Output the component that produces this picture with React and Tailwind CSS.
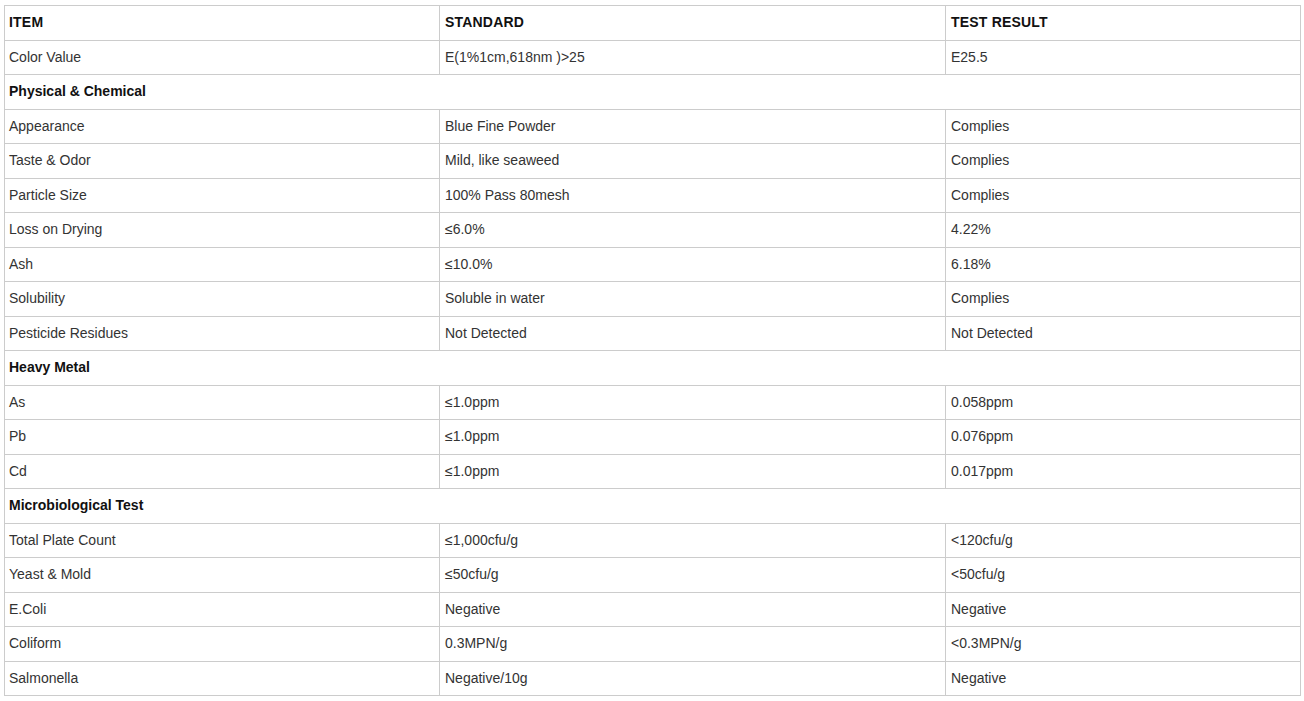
import React from "react";

const rows = [
  ["head", "ITEM", "STANDARD", "TEST RESULT"],
  ["row", "Color Value", "E(1%1cm,618nm )>25", "E25.5"],
  ["group", "Physical & Chemical"],
  ["row", "Appearance", "Blue Fine Powder", "Complies"],
  ["row", "Taste & Odor", "Mild, like seaweed", "Complies"],
  ["row", "Particle Size", "100% Pass 80mesh", "Complies"],
  ["row", "Loss on Drying", "≤6.0%", "4.22%"],
  ["row", "Ash", "≤10.0%", "6.18%"],
  ["row", "Solubility", "Soluble in water", "Complies"],
  ["row", "Pesticide Residues", "Not Detected", "Not Detected"],
  ["group", "Heavy Metal"],
  ["row", "As", "≤1.0ppm", "0.058ppm"],
  ["row", "Pb", "≤1.0ppm", "0.076ppm"],
  ["row", "Cd", "≤1.0ppm", "0.017ppm"],
  ["group", "Microbiological Test"],
  ["row", "Total Plate Count", "≤1,000cfu/g", "<120cfu/g"],
  ["row", "Yeast & Mold", "≤50cfu/g", "<50cfu/g"],
  ["row", "E.Coli", "Negative", "Negative"],
  ["row", "Coliform", "0.3MPN/g", "<0.3MPN/g"],
  ["row", "Salmonella", "Negative/10g", "Negative"],
];

const cell = "border border-[#cccccc] pr-[5px] h-[34.5px] align-middle";

export default function App() {
  return (
    <div className="bg-white min-h-screen pt-[5px] pl-[4px] font-['Liberation_Sans',Arial,sans-serif] text-[14px] text-[#333333]">
      <table className="w-[1296px] table-fixed border-collapse">
        <colgroup>
          <col className="w-[435px]" />
          <col className="w-[506px]" />
          <col className="w-[355px]" />
        </colgroup>
        <tbody>
          {rows.map((r, i) =>
            r[0] === "group" ? (
              <tr key={i}>
                <td colSpan={3} className={cell + " pl-[4px] font-bold text-[#111111]"}>
                  {r[1]}
                </td>
              </tr>
            ) : (
              <tr key={i}>
                {r.slice(1).map((t, j) => (
                  <td
                    key={j}
                    className={
                      cell +
                      (j === 0 ? " pl-[4px]" : " pl-[5px]") +
                      (r[0] === "head" ? " font-bold text-[#111111] tracking-[0.2px]" : "")
                    }
                  >
                    {t}
                  </td>
                ))}
              </tr>
            )
          )}
        </tbody>
      </table>
    </div>
  );
}
